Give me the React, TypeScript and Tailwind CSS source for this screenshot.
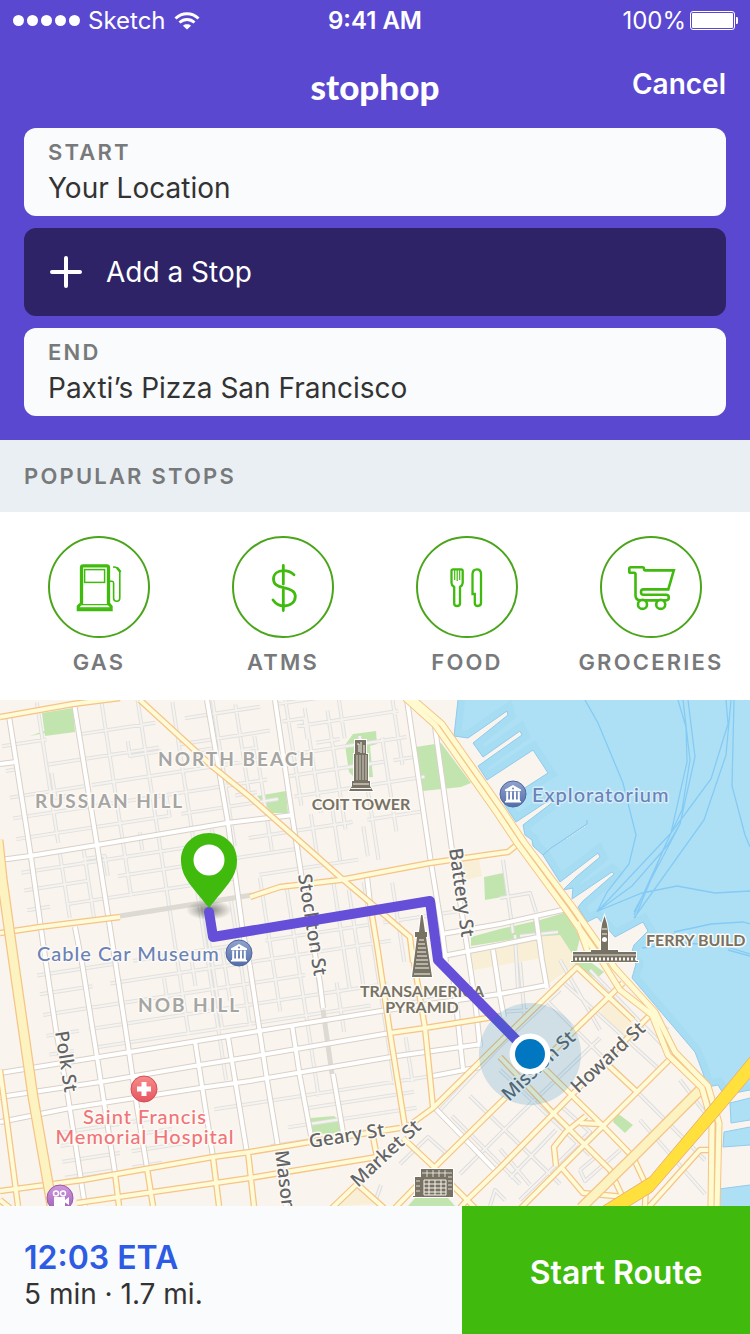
import React from "react";

const WATER =
  "M458 0 L454 36 L468 38 L507 11 L508 15 L473 43 L483 57 L520 31 L522 35 L478 66 L487 80 L533 50 L548 73 L520 91 L504 104 L516 122 L551 99 L553 102 L523 125 L525 135 L532 140 L533 146 L543 155 L560 182 L598 153 L600 157 L576 177 L563 190 L573 188 L572 199 L612 172 L614 174 L583 201 L578 207 L587 222 L597 217 L615 237 L643 222 L648 231 L634 245 L630 257 L636 264 L632 278 L655 305 L695 352 L703 373 L707 387 L718 385 L724 395 L750 390 H775 V-20 H459 Z";

const INLETS = [
  "M730 403 L750 398 H760 V420 H750 L731 423 Z",
  "M724 432 L750 427 H760 V445 H750 L723 447 Z",
  "M719 489 L750 485 H760 V516 H719 Z",
];

const PARKS = [
  "M42 13 L73 8 L75 32 L45 36 Z",
  "M45 33 L30 36 L44 31 Z",
  "M257 96 L286 91 L288 113 L272 113 Z",
  "M345 45 L353 34 L376 31 L377 44 L370 46 L373 77 L355 78 L349 72 Z",
  "M416 47 L441 43 L471 83 L461 87 L423 91 Z",
  "M484 177 L503 173 L508 196 L485 200 Z",
  "M471 237 L500 229 L540 220 L567 212 L580 238 L575 258 L560 235 L520 238 L471 246 Z",
  "M575 250 L585 258 L604 272 L596 279 L573 262 Z",
  "M311 418 L334 416 L340 421 L342 433 L311 434 Z",
  "M616 412 L633 425 L625 433 L613 422 Z",
  "M415 498 H448 L455 506 H408 Z",
];

const SAND = [
  "M462 161 L479 159 L482 176 L466 180 Z",
  "M470 250 L500 245 L560 231 L573 252 L576 264 L545 286 L542 258 L495 266 L474 270 Z",
  "M608 300 L640 331 L627 342 L600 313 Z",
  "M345 498 L357 486 L376 504 L340 506 Z",
];

/* u/v pairs in the frame of the downtown grid */
const GRID_MINOR = [
  "M-5 46H40 M70 46H150 M180 46H256 M272 46H380",
  "M-5 71H8 M38 71H150 M170 71H262 M290 71H392",
  "M-5 98H70 M78 98H250 M272 98H396",
  "M-5 119H252 M272 119H370 M380 119H400",
  "M-5 140H150 M162 140H260 M276 140H408",
  "M-5 174H205 M225 174H330 M345 174H404",
  "M-5 192H60 M90 192H275",
  "M-5 212H18 M36 212H204 M230 212H330",
  "M-5 278H72 M92 278H210 M226 278H330 M345 278H430",
  "M-5 297H48 M66 297H350",
  "M-5 318H260",
  "M-5 339H28 M38 339H340",
  "M-5 358H20 M40 358H320 M360 358H410",
  "M-8 437H55 M62 437H88 M150 437H380",
  "M-8 450H55 M70 450H105 M240 450H350",
  "M-8 466H50 M62 466H120 M220 466H350",
  "M-8 482H40 M60 482H90 M200 482H300",
  "M36 8V150 M100 8V214 M136 12V360 M170 28V358 M36 160V226 M60 160V230",
  "M210 30V180 M232 40V130 M246 74V190 M282 40V150 M300 54V160 M322 60V180",
  "M350 90V215 M372 95V190 M290 160V206 M312 155V210 M166 220V410 M198 230V360",
  "M230 215V350 M255 224V440 M302 225V340 M316 240V350 M332 235V440 M360 240V320",
  "M120 300V330 M150 288V312 M182 280V332 M272 300V360 M290 330V380 M350 395V440",
  "M40 80V105 H55 M58 170H80V190 M118 152V170 M186 80H208V104 M276 64H298V85",
  "M335 40V90 M388 50V125 M190 160V185 M218 130H240 M120 60V75H152",
  "M150 120V142 M230 86H246V112 M306 90H330 M60 182V208 M340 180V210",
];

const SOMA_MINOR = [
  "M440 410 L500 346 L560 290 M460 474 L520 414 L600 338",
  "M452 416 L520 484 M470 396 L560 484 M500 370 L590 455 M546 300 L705 460",
  "M563 282 L660 370 M590 270 L700 384 M520 500 L590 432 L560 405",
  "M400 464 L428 437 L446 453 L424 478 M500 449 L530 485 M510 478 L556 430",
  "M580 470 L598 455 M580 470 L585 481 L620 450 M640 420 L705 494 M680 380 L718 430",
  "M375 502 L381 485 M490 506 L495 490 L505 500",
  "M500 198 L530 193 L536 212 M503 160 L513 233 M515 235 L518 290 M520 236 L558 232 M560 260 L600 330",
  "M656 300 L640 285 M668 330 L655 320 M520 262 L525 320 M500 312 L528 310",
];

const TUNNELS = ["M120 216 L252 195", "M323 310 L332 374"];

const WHITE = [
  "M9 16 L31 157 L44 250 L56 330 L68 397 L85 506",
  "M74 3 L97 145 L115 260 L129 352 L137 407 L147 468",
  "M75 227 L82 263 L97 357 L115 473",
  "M207 0 L228 123 L243 233 L250 267 L267 380 L278 447 L286 506",
  "M275 0 L292 115 L301 173 L320 283 L323 308",
  "M333 374 L343 432",
  "M407 0 L431 163 L442 230 L446 262",
  "M435 27 L452 150 L465 233 L475 300 L480 347",
  "M367 177 L370 203",
  "M0 160 L30 156 L97 145 L227 123 L293 115",
  "M0 64 L16 62",
  "M0 373 L130 352 L228 336 L387 310 L500 294 L547 285",
  "M0 397 L100 382 L200 365 L250 357 L390 333",
  "M0 422 L70 408 L200 388 L250 381 L397 356 L482 344",
  "M433 376 L480 367",
  "M195 341 L213 457",
  "M228 337 L247 453",
  "M292 325 L300 377 L311 436",
  "M453 275 L463 369",
  "M493 250 L500 296 L504 317",
  "M442 234 L500 224 L567 209",
  "M443 256 L500 245 L538 237",
  "M536 217 L542 260 L547 288",
  "M435 408 L495 470",
];

const YELLOW = [
  "M0 17 L73 4 L120 -2",
  "M140 0 L213 67 L250 97 L340 177 L373 205 L410 237 L413 262",
  "M0 233 L40 227 L120 217",
  "M250 197 L280 187 L340 180 L430 163 L500 153 L508 152 L518 144",
  "M370 203 L378 252 L390 333 L397 377 L405 427",
  "M412 250 L425 328 L433 407",
  "M390 333 L425 328 L500 316",
  "M0 491 L83 480 L213 457 L250 452 L310 442 L400 428",
  "M77 503 L250 478 L377 457 L373 437",
  "M0 370 L7 422 L18 506",
  "M115 473 L119 506 M147 468 L153 506 M213 457 L219 506 M248 452 L254 506",
  "M332 508 L357 484 L384 508",
  "M500 468 L467 500 L460 508 M403 438 L435 468 L475 508",
  "M403 430 L433 408 L500 342 L577 267 L633 320",
  "M395 508 L435 467 L500 403 L623 283",
  "M500 468 L652 313",
  "M521 508 L672 357",
  "M500 357 L553 413 L610 470 L624 500",
  "M500 320 L543 367 L600 423 L633 457 L646 485 L645 506",
  "M608 365 L637 392",
  "M562 468 L583 493 L635 498",
  "M586 416 L566 432 L554 447 L556 466 M580 423 L600 424",
  "M0 500 L10 508",
  "M648 508 L700 450 L720 450",
];

const WIDE_YELLOW = ["M-2 140 L2 178 L12 250 L33 397 L52 506", "M581 508 L633 457 L703 387"];

const EMBARCADERO = [
  "M405 -2 L435 25 L497 113 L517 143 L567 211 L600 258 L620 290 L652 315 L668 355 L702 388 L712 423 L711 508",
  "M412 -2 L442 24 L504 112 L524 142 L572 206 L600 246 L615 268 L655 312 L675 352 L708 386 L719 423 L717 508",
  "M577 222 L590 258",
];

const FERRIES = [
  "M585 0 L598 23 L623 83 L636 135 L629 164 L607 192 L597 212",
  "M678 0 L686 27 L687 62 L671 133 L634 215",
  "M683 0 L690 60 L682 110 L664 148 L635 218",
  "M688 0 L695 57 L680 124 L634 212",
  "M726 0 L728 24 L711 79 L671 133 L597 212",
  "M731 0 L726 55 L704 120 L634 218",
  "M734 0 L732 86 L745 135 L750 147",
  "M599 210 L632 186 L667 146 L681 122",
  "M598 211 L642 193 L677 186 L715 193 L750 191",
  "M674 232 L711 224 L743 222 L750 224",
  "M642 248 L680 243 L720 245 L750 254",
  "M728 250 L750 256",
];

type RoadProps = { lines: string[]; edge: string; fill: string; outer: number; inner: number };

function Roads({ lines, edge, fill, outer, inner }: RoadProps) {
  const d = lines.join(" ");
  return (
    <g fill="none" strokeLinejoin="round">
      <path d={d} stroke={edge} strokeWidth={outer} />
      <path d={d} stroke={fill} strokeWidth={inner} />
    </g>
  );
}

function Museum({ x, y }: { x: number; y: number }) {
  return (
    <g transform={`translate(${x} ${y})`}>
      <circle r="13" fill="url(#museum)" stroke="#4f679f" />
      <path d="M-8 -4.500 L0 -9 L8 -4.500 V-3 H-8 Z M-7 5.500 H7 V7 H-7 Z M-8 7 H8 V8.500 H-8 Z" fill="#fff" />
      <path d="M-5.800 -2.500V6 M-2 -2.500V6 M2 -2.500V6 M5.800 -2.500V6" stroke="#fff" strokeWidth="2" />
      <circle cy="-5.500" r="1" fill="#6a82b8" />
    </g>
  );
}

function CityMap() {
  return (
    <svg
      viewBox="0 0 750 506"
      preserveAspectRatio="xMidYMid slice"
      role="img"
      aria-label="Route map"
      className="block min-h-80 w-full flex-1 basis-0 bg-[#f9f4ed]"
    >
      <defs>
        <linearGradient id="museum" x1="0" y1="0" x2="0" y2="1">
          <stop offset="0" stopColor="#8fa3cf" />
          <stop offset="1" stopColor="#556da8" />
        </linearGradient>
        <linearGradient id="hospital" x1="0" y1="0" x2="0" y2="1">
          <stop offset="0" stopColor="#f98b8b" />
          <stop offset="1" stopColor="#e65560" />
        </linearGradient>
        <linearGradient id="cinema" x1="0" y1="0" x2="0" y2="1">
          <stop offset="0" stopColor="#cf9add" />
          <stop offset="1" stopColor="#a05db8" />
        </linearGradient>
        <radialGradient id="shadow">
          <stop offset="0" stopColor="#3c3c3c" stopOpacity=".65" />
          <stop offset="1" stopColor="#3c3c3c" stopOpacity="0" />
        </radialGradient>
        <clipPath id="sea">
          <path d={WATER} />
        </clipPath>
      </defs>
      <rect width="750" height="506" fill="#f9f4ed" />
      <path d={SAND.join(" ")} fill="#f9efd6" />
      <path d={PARKS.join(" ")} fill="#c2e5b0" />
      <g transform="rotate(-8.7)">
        <Roads lines={GRID_MINOR} edge="#e1e1df" fill="#f6f3ef" outer={4} inner={2} />
      </g>
      <Roads lines={SOMA_MINOR} edge="#dcdddd" fill="#f6f3ef" outer={4} inner={2} />
      <path d={WATER + INLETS.join(" ")} fill="#aee0f5" />
      <g clipPath="url(#sea)" fill="none">
        <path d={WATER} stroke="#9fd9ef" strokeWidth="14" opacity=".5" />
        <path d={FERRIES.join(" ")} stroke="#84caf4" strokeWidth="1.300" />
      </g>
      <path d={WATER + INLETS.join(" ")} fill="none" stroke="#93caee" strokeWidth="1" />
      <path d="M543 155 L551 148 L587 124 L587 120" fill="none" stroke="#88c3ec" />
      <path d="M567 139 L587 125" fill="none" stroke="#f9f4ed" strokeDasharray="1 2" />

      <path d={TUNNELS.join(" ")} fill="none" stroke="#dcdad2" strokeWidth="5" />
      <Roads lines={WHITE} edge="#d9d1c8" fill="#ffffff" outer={6} inner={4} />
      <Roads lines={YELLOW} edge="#f5c488" fill="#fffbd6" outer={6.5} inner={4} />
      <Roads lines={WIDE_YELLOW} edge="#f5c488" fill="#fdf3c0" outer={11} inner={8.5} />
      <Roads lines={EMBARCADERO} edge="#f5c488" fill="#fffad0" outer={7} inner={5} />
      <path d="M761 346 L750 357 L713 402 L650 477 L600 508 L626 508 L652 492 L718 416 L750 378 L761 366 Z" fill="#ffe03c" stroke="#eeb070" />

      <g fill="#777263" stroke="#ffffff" strokeWidth="2" paintOrder="stroke">
        <path d="M355 40H366V54H368V81H370V86L373 91H349L352 86V81H354V54H355Z" />
        <path d="M421 215H422.500L425 232H427V237H426L432 277H412L417 237H415V232H419Z" />
        <path d="M571 262V261H573V252H591V250H601V232L602 224L604.500 216L607 224L608 232V250H618V252H636V261H638V262Z" />
        <path d="M415 477H421V469H453V497H413V496H415Z" />
      </g>
      <g stroke="#f9f4ed" fill="none">
        <path d="M357 55V80 M360 55V80 M363 55V80 M366 55V80" strokeWidth=".7" />
        <path d="M357 44H359V52 M361 42V53 M364 45V53 M351 88.500H371 M353 84H369" strokeWidth="1" />
        <path d="M419 240H424 M418 244H425 M418 248H426 M417 252H426 M417 256H427 M416 260H428 M416 264H428 M415 268H429 M414 274H430" strokeWidth="1" />
        <path d="M573 255H636" strokeWidth=".8" />
        <path d="M575 259H636" strokeWidth="3" strokeDasharray="2 2" />
        <path d="M602 229H607 M602 234H607" strokeWidth="1" />
        <path d="M424 480H446V495H424Z M424 484H446 M424 488H446 M424 492H446 M429 480V495 M435 480V495 M441 480V495" strokeWidth="1" />
        <path d="M422 473H452 M448 477H452 M448 481H452 M448 485H452 M448 489H452 M427 470V477 M433 470V477 M439 470V477 M445 470V477 M416 481H420 M416 486H420 M416 491H420" strokeWidth=".8" />
      </g>
      <circle cx="604.500" cy="239.500" r="2.500" fill="#fff" />

      <g stroke="#fdfaf5" strokeWidth="3" strokeLinejoin="round" paintOrder="stroke" fontFamily="Lato, sans-serif">
        <g fill="#a5a5a4" fontSize="19" fontWeight="700" letterSpacing="2">
          <text x="158" y="66">NORTH BEACH</text>
          <text x="35" y="108">RUSSIAN HILL</text>
          <text x="138" y="312">NOB HILL</text>
        </g>
        <g fill="#777263" fontSize="16" fontWeight="700">
          <text x="361" y="110" textAnchor="middle">COIT TOWER</text>
          <text x="422" y="297" textAnchor="middle">TRANSAMERICA</text>
          <text x="422" y="313" textAnchor="middle">PYRAMID</text>
          <text x="646" y="246">FERRY BUILD</text>
        </g>
        <g fill="#6a82b8" fontSize="20" fontWeight="500" letterSpacing="1">
          <text x="532" y="102" stroke="#d4edf8">Exploratorium</text>
          <text x="37" y="261">Cable Car Museum</text>
        </g>
        <g fill="#f07479" fontSize="20" fontWeight="500" textAnchor="middle" letterSpacing="1">
          <text x="145" y="424">Saint Francis</text>
          <text x="145" y="444">Memorial Hospital</text>
        </g>
        <g fill="#636466" fontSize="19" fontWeight="500" fontFamily="'Noto Sans', sans-serif">
          <text transform="translate(298 175) rotate(81)">Stockton St</text>
          <text transform="translate(449 149) rotate(82)">Battery St</text>
          <text transform="translate(55 332) rotate(81)">Polk St</text>
          <text transform="translate(275 451) rotate(83)">Mason</text>
          <text transform="translate(310 448) rotate(-9)">Geary St</text>
          <text transform="translate(358 488) rotate(-43)">Market St</text>
          <text transform="translate(509 402) rotate(-43)">Mission St</text>
          <text transform="translate(578 394) rotate(-43)">Howard St</text>
        </g>
      </g>

      <Museum x={513} y={94} />
      <Museum x={239} y={253} />
      <g transform="translate(144 389)">
        <circle r="13" fill="url(#hospital)" stroke="#cf4f58" />
        <path d="M-2.500 -7H2.500V-2.500H7V2.500H2.500V7H-2.500V2.500H-7V-2.500H-2.500Z" fill="#fff" />
      </g>
      <g transform="translate(60 498)">
        <circle r="13" fill="url(#cinema)" stroke="#9858b0" />
        <path d="M-6 -1H5V2L9 -1V7L5 4.500V8H-6Z" fill="#fff" />
        <circle cx="-4" cy="-4.500" r="2.500" fill="none" stroke="#fff" strokeWidth="1.500" />
        <circle cx="3" cy="-4.500" r="2.500" fill="none" stroke="#fff" strokeWidth="1.500" />
      </g>

      <ellipse cx="209" cy="210" rx="23" ry="10" fill="url(#shadow)" />
      <path d="M209 212 L213 237 L430 201 L438 260 L530 354" fill="none" stroke="#654fd8" strokeWidth="10" strokeLinecap="round" strokeLinejoin="round" />
      <circle cx="530" cy="354" r="51" fill="#0077c0" opacity=".17" />
      <circle cx="530" cy="354" r="20.500" fill="#fff" />
      <circle cx="530" cy="354" r="15" fill="#0077c0" />
      <path d="M209 133C193 133 181 145 181 160C181 178 193 187 209 208C225 187 237 178 237 160C237 145 225 133 209 133Z" fill="#3fba0d" />
      <circle cx="209" cy="160" r="15.500" fill="#fff" />
    </svg>
  );
}

const STOPS = [
  {
    name: "GAS",
    icon: (
      <>
        <path d="M33.500 68V31.500Q33.500 29.800 35.200 29.800H58.800Q60.500 29.800 60.500 31.500V68" strokeWidth="3.300" />
        <rect x="36.600" y="33.600" width="20" height="12.800" strokeWidth="1.500" />
        <path d="M33 68.700H61 M31 72H62.500" strokeWidth="1.300" />
        <path d="M32.500 68L30.200 70.500V73.800H63.200V70.500L61 68" strokeWidth="3" />
        <path d="M61.500 45.300H64Q65.600 45.300 65.600 47V61.500Q65.600 65.300 68.700 65.300Q71.800 65.300 71.800 61.500V36Q71 31 65 31" strokeWidth="1.600" />
        <path d="M69 31.800L72.500 36" strokeWidth="2.500" />
      </>
    ),
  },
  {
    name: "ATMS",
    icon: (
      <>
        <path d="M51.300 29.500V48 M51.300 54V74.500" strokeWidth="2.800" strokeLinecap="round" />
        <path d="M62 38.700C59 36 56 34.700 51.500 34.700C45.500 34.700 41.500 38 41.500 43C41.500 48.500 45.500 50.300 51.500 51.700C58.500 53.300 63.300 55 63.300 60.200C63.300 66 58.500 70 52 70C47 70 43.500 67.500 41 64" strokeWidth="2.800" strokeLinecap="round" />
      </>
    ),
  },
  {
    name: "FOOD",
    icon: (
      <>
        <path d="M35.500 35Q35.500 33.300 37.200 33.300H45Q46.700 33.300 46.700 35V47Q46.700 49 44 51V67.500Q44 70 41 70Q38.200 70 38.200 67.500V51Q35.500 49 35.500 47Z" strokeWidth="2.300" />
        <path d="M38.700 34V44 M41.200 34V45 M43.700 34V44" strokeWidth="1.200" />
        <path d="M56.500 38.500Q56.500 33.300 61 33.300Q65 33.300 65 38V66.500Q65 70 61.800 70Q58.800 70 58.800 67V58H56.500Z" strokeWidth="2.300" />
      </>
    ),
  },
  {
    name: "GROCERIES",
    icon: (
      <>
        <path d="M30.500 36.800Q29.300 36.800 29.300 35.500V32.800Q29.300 31.300 30.800 31.300H42.500Q44 31.300 44 33Q44 34.400 45.500 34.400H73.800L68.300 53.400H43.500Q41 53.400 41 56Q41 58.800 43.500 58.800H66Q68.800 58.800 68.800 61.600Q68.800 64.400 66 64.400H40.500Q35.500 64.400 35.500 59V38Q35.500 36.800 34.300 36.800Z" strokeWidth="2.600" />
        <circle cx="42.500" cy="68.400" r="4.500" strokeWidth="2.600" fill="#fff" />
        <circle cx="60.700" cy="68.400" r="4.500" strokeWidth="2.600" fill="#fff" />
      </>
    ),
  },
];

function Field({ id, label, value }: { id: string; label: string; value: string }) {
  return (
    <div className="flex h-22 flex-col rounded-xl bg-[#fafbfd] px-6 pt-3">
      <label htmlFor={id} className="text-[22px] leading-6 font-semibold tracking-widest text-[#77797b]">
        {label}
      </label>
      <input
        id={id}
        type="text"
        defaultValue={value}
        className="h-12 w-full bg-transparent text-[28px] text-[#333] outline-none"
      />
    </div>
  );
}

function StatusBar() {
  return (
    <div className="grid h-10 grid-cols-3 items-center px-3 pt-px text-[24px] leading-7">
      <div className="flex items-center gap-2">
        <div className="flex gap-[3px] pl-px">
          {[0, 1, 2, 3, 4].map((n) => (
            <span key={n} className="size-[11px] rounded-full bg-white" />
          ))}
        </div>
        <span>Sketch</span>
        <svg width="26" height="18" viewBox="0 0 26 18" fill="none" stroke="#fff" strokeWidth="3" aria-hidden="true">
          <path d="M1.500 6.500C8 .2 18 .2 24.500 6.500" />
          <path d="M5.500 10.500C10 6.500 16 6.500 20.500 10.500" />
          <path d="M13 17.500L9 13.700C11 11.800 15 11.800 17 13.700Z" fill="#fff" stroke="none" />
        </svg>
      </div>
      <span className="text-center font-semibold">9:41 AM</span>
      <div className="flex items-center justify-end gap-1">
        <span>100%</span>
        <svg width="48" height="20" viewBox="0 0 48 20" aria-hidden="true">
          <rect x=".5" y=".5" width="44" height="18" rx="2.500" fill="none" stroke="#fff" />
          <rect x="2" y="2" width="41" height="15" rx="1" fill="#fff" />
          <path d="M46 6H47Q48 6 48 8V11Q48 13 47 13H46Z" fill="#fff" />
        </svg>
      </div>
    </div>
  );
}

export default function App() {
  return (
    <div className="flex min-h-screen flex-col bg-white font-['Inter','Liberation_Sans',sans-serif]">
      <header className="bg-[#5b48d0] text-white">
        <StatusBar />
        <div className="grid h-22 grid-cols-3 items-center px-6">
          <span />
          <h1 className="pt-1 text-center font-['Lato',sans-serif] text-[35px] leading-10 font-black">stophop</h1>
          <button type="button" className="justify-self-end text-[28px] leading-9 font-semibold">
            Cancel
          </button>
        </div>
        <form className="flex flex-col gap-3 px-6 pb-6">
          <Field id="start" label="START" value="Your Location" />
          <button
            type="button"
            className="flex h-22 items-center gap-6 rounded-xl bg-[#2d2366] px-[26px] text-[28px] leading-9"
          >
            <svg width="32" height="32" viewBox="0 0 32 32" stroke="#fff" strokeWidth="4" strokeLinecap="round" aria-hidden="true">
              <path d="M2 16H30M16 2V30" />
            </svg>
            Add a Stop
          </button>
          <Field id="end" label="END" value="Paxti’s Pizza San Francisco" />
        </form>
      </header>

      <h2 className="flex h-18 items-center bg-[#eaeff3] px-6 text-[22px] leading-7 font-semibold tracking-widest text-[#77797b]">
        POPULAR STOPS
      </h2>
      <nav aria-label="Popular stops" className="grid h-47 grid-cols-4 bg-white px-[7px] pt-6">
        {STOPS.map(({ name, icon }) => (
          <button
            key={name}
            type="button"
            className="flex flex-col items-center gap-[10px] text-[22px] leading-7 font-semibold tracking-widest text-[#77797b]"
          >
            <svg width="102" height="102" viewBox="0 0 102 102" fill="none" stroke="#3fba0d" aria-hidden="true">
              <circle cx="51" cy="51" r="50" stroke="#4ba51b" strokeWidth="2" />
              {icon}
            </svg>
            {name}
          </button>
        ))}
      </nav>

      <CityMap />

      <footer className="flex h-32">
        <div className="flex flex-1 flex-col justify-center bg-[#fafbfd] px-6 pt-3">
          <p className="text-[32px] leading-9 font-semibold text-[#2d5be3]">12:03 ETA</p>
          <p className="text-[28px] leading-9 text-[#333]">5 min · 1.7 mi.</p>
        </div>
        <button type="button" className="w-72 bg-[#3fba0d] pt-1.5 pl-5 text-[32px] leading-10 font-semibold text-white">
          Start Route
        </button>
      </footer>
    </div>
  );
}
